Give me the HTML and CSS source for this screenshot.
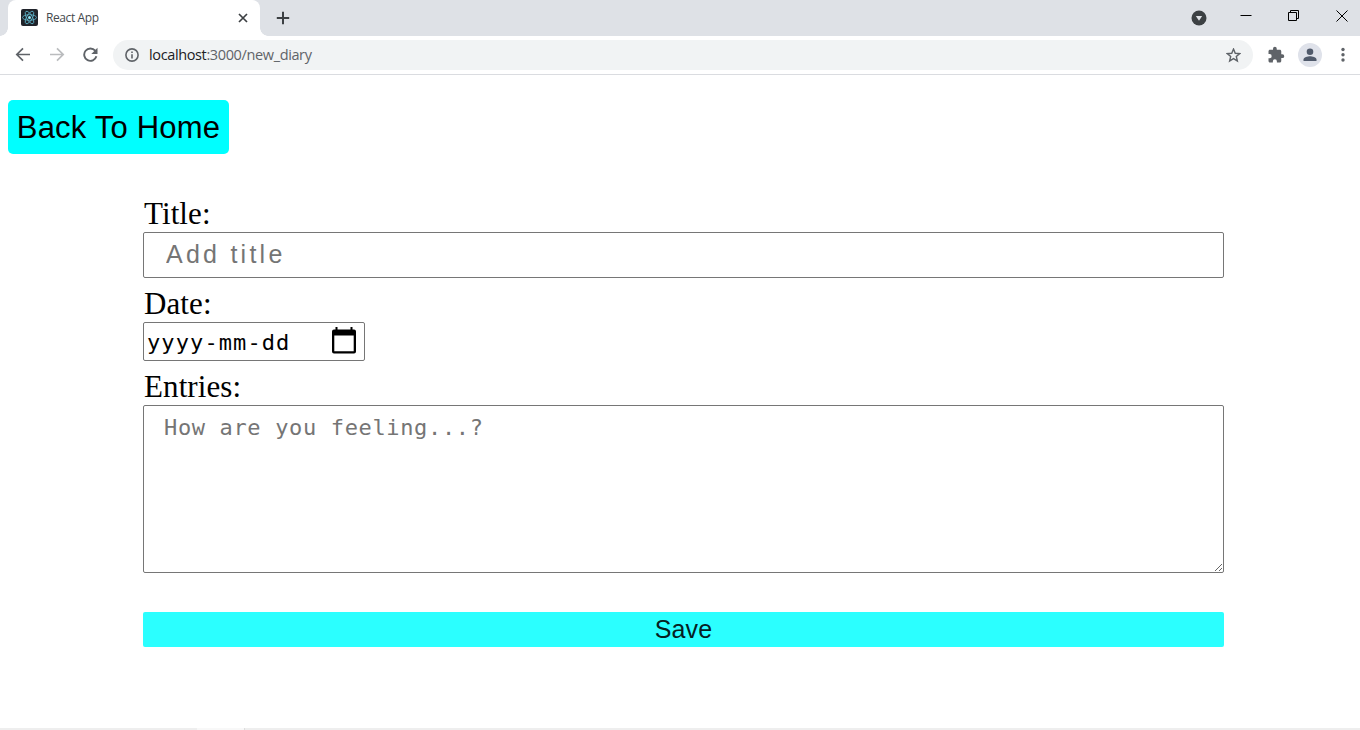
FILE: index.html
```html
<!DOCTYPE html>
<html lang="en">
<head>
<meta charset="utf-8">
<title>React App</title>
<link rel="stylesheet" href="styles.css">
</head>
<body>
<header class="tabs">
  <div class="tab">
    <svg class="favicon" width="17" height="17" viewBox="0 0 17 17"><rect width="17" height="17" rx="2" fill="#20232a"/><g fill="none" stroke="#61b9d0" stroke-width=".8"><ellipse cx="8.5" cy="8.5" rx="7" ry="2.8"/><ellipse cx="8.5" cy="8.5" rx="7" ry="2.8" transform="rotate(60 8.5 8.5)"/><ellipse cx="8.5" cy="8.5" rx="7" ry="2.8" transform="rotate(120 8.5 8.5)"/></g><circle cx="8.5" cy="8.5" r="1.500" fill="#8fe5f5"/></svg>
    <span class="tab-title">React App</span>
    <svg class="tab-close" width="10" height="10" viewBox="0 0 10 10"><path d="M1 1l8 8M9 1L1 9" stroke="#3c4043" stroke-width="1.700"/></svg>
  </div>
  <svg class="new-tab" width="14" height="14" viewBox="0 0 14 14"><path d="M7 .8v12.400M.8 7h12.400" stroke="#3c4043" stroke-width="2"/></svg>
  <div class="window-controls">
    <svg width="16" height="16" viewBox="0 0 16 16"><circle cx="8" cy="8" r="7.500" fill="#3c4043"/><path d="M4.800 6h6.400L8 10.800z" fill="#dee1e6"/></svg>
    <svg width="12" height="12" viewBox="0 0 12 12"><path d="M.5 5.500h11" stroke="#000"/></svg>
    <svg width="12" height="12" viewBox="0 0 12 12"><path d="M.5 2.500h8v8h-8zM2.500 2.500v-2h8v8h-2" fill="none" stroke="#000"/></svg>
    <svg width="12" height="12" viewBox="0 0 12 12"><path d="M.5.5l11 11M11.500.5l-11 11" stroke="#000"/></svg>
  </div>
</header>
<nav class="toolbar">
  <svg class="nav-icon" width="16" height="16" viewBox="0 0 16 16"><path d="M15 7.500H2M8 1.300L1.800 7.500 8 13.700" fill="none" stroke="#5f6368" stroke-width="1.700"/></svg>
  <svg class="nav-icon" width="16" height="16" viewBox="0 0 16 16"><path d="M1 7.500h13M8 1.300L14.200 7.500 8 13.700" fill="none" stroke="#babcbe" stroke-width="1.700"/></svg>
  <svg class="nav-icon" width="16" height="16" viewBox="0 0 16 16"><path d="M12.200 3.700A6.200 6.200 0 1 0 13.400 9.300" fill="none" stroke="#5f6368" stroke-width="1.900"/><path d="M14.500.8v6.200H8.300z" fill="#5f6368"/></svg>
  <div class="address">
    <svg width="14" height="14" viewBox="0 0 14 14"><circle cx="7" cy="7" r="6.100" fill="none" stroke="#5f6368" stroke-width="1.600"/><path d="M7 6.200v4.200M7 3.500v1.500" stroke="#5f6368" stroke-width="1.600"/></svg>
    <span class="url"><b>localhost</b>:3000/new_diary</span>
    <svg class="star" width="15" height="15" viewBox="0 0 15 15"><path d="M7.500 1.100l1.750 4.150 4.450.38-3.400 2.900 1.050 4.370L7.500 10.550 3.650 12.900 4.700 8.530 1.300 5.630l4.450-.38z" fill="none" stroke="#5f6368" stroke-width="1.400"/></svg>
  </div>
  <svg class="puzzle" width="18" height="18" viewBox="0 0 24 24"><path fill="#5f6368" d="M20.500 11H19V7c0-1.100-.9-2-2-2h-4V3.500a2.500 2.500 0 0 0-5 0V5H4c-1.100 0-1.990.9-1.990 2v3.800H3.500a2.700 2.700 0 0 1 0 5.400H2V20c0 1.100.9 2 2 2h3.800v-1.500a2.700 2.700 0 0 1 5.400 0V22H17c1.100 0 2-.9 2-2v-4h1.500a2.500 2.500 0 0 0 0-5z"/></svg>
  <svg class="profile" width="24" height="24" viewBox="0 0 24 24"><circle cx="12" cy="12" r="12" fill="#dfe2ea"/><circle cx="12" cy="8.700" r="3.300" fill="#505a6b"/><path d="M5.500 18v-1.500c0-2.200 4.300-3.300 6.500-3.300s6.500 1.100 6.500 3.300V18z" fill="#505a6b"/></svg>
  <svg class="menu" width="4" height="16" viewBox="0 0 4 16"><g fill="#5f6368"><circle cx="2" cy="2.500" r="1.700"/><circle cx="2" cy="7.700" r="1.700"/><circle cx="2" cy="13" r="1.700"/></g></svg>
</nav>
<main class="page">
  <button class="home">Back To Home</button>
  <form class="diary">
    <label class="label" for="title">Title:</label>
    <input class="title-input" id="title" type="text" placeholder="Add title">
    <span class="label date-label">Date:</span>
    <div class="date-input">
      <span>yyyy-mm-dd</span>
      <svg width="24" height="27" viewBox="0 0 24 27"><path d="M3.500 0h2v2.500h13V0h2v2.500H22a2 2 0 0 1 2 2v20a2 2 0 0 1-2 2H2a2 2 0 0 1-2-2v-20a2 2 0 0 1 2-2h1.500zM2.300 8.500v15.700h19.400V8.500z" fill="#000" fill-rule="evenodd"/></svg>
    </div>
    <label class="label entries-label" for="entries">Entries:</label>
    <textarea class="entries-input" id="entries" placeholder="How are you feeling...?"></textarea>
    <button class="save" type="button">Save</button>
  </form>
</main>
<footer class="edge"><span></span></footer>
</body>
</html>
```
FILE: styles.css
```css
* { box-sizing: border-box; }
body { margin: 0; height: 730px; display: flex; flex-direction: column; overflow: hidden; background: #fff; font-family: "Liberation Sans", Arial, sans-serif; }
svg { display: block; flex: none; }
.tabs { height: 36px; display: flex; align-items: center; padding-left: 8px; flex: none; background: radial-gradient(circle at 0 0, #dee1e6 7.5px, #fff 8px) 0 100% / 8px 8px no-repeat, radial-gradient(circle at 100% 0, #dee1e6 7.5px, #fff 8px) 260px 100% / 8px 8px no-repeat, #dee1e6; }
.tab { width: 252px; height: 36px; background: #fff; border-radius: 8px 8px 0 0; display: flex; align-items: center; padding: 0 12px 1px 13px; }
.tab-title { font: 12px "Open Sans", sans-serif; letter-spacing: -0.4px; color: #45494d; margin-left: 8px; }
.tab-close { margin-left: auto; }
.new-tab { margin-left: 16px; }
.window-controls { margin-left: auto; display: flex; align-items: center; padding: 0 12px 4px 0; gap: 36px; }
.window-controls svg:first-child { margin: 3px -3px 0 0; }
.toolbar { height: 39px; flex: none; border-bottom: 1px solid #dadce0; display: flex; align-items: center; padding-left: 15px; }
.nav-icon { margin-right: 18px; }
.nav-icon:nth-child(3) { margin-right: 14px; }
.address { width: 1140px; height: 30px; border-radius: 15px; background: #f1f3f4; display: flex; align-items: center; padding: 0 12px; }
.url { font: 14.5px "Open Sans", sans-serif; letter-spacing: -0.37px; color: #5f6368; margin: 0 0 2px 10px; }
.url b { font-weight: 400; color: #202124; }
.star { margin-left: auto; }
.puzzle { margin-left: 14px; }
.profile { margin-left: 13px; }
.menu { margin-left: 19px; }
.page { flex: 1; padding: 25px 8px 0; }
button { font-family: "Liberation Sans", Arial, sans-serif; border: 0; color: #000; padding: 0; display: block; }
.home { width: 221px; height: 54px; padding-top: 2px; border-radius: 5px; background: #00ffff; font-size: 31px; letter-spacing: 0.2px; white-space: nowrap; }
.diary { width: 1081px; margin: 42px 0 0 135px; display: flex; flex-direction: column; }
.label { font: 31px/36px "Liberation Serif", "Times New Roman", serif; letter-spacing: 0.1px; color: #000; padding-left: 1px; }
.title-input { height: 46px; border: 1px solid #767676; border-radius: 2px; padding: 0 22px 2px; font: 25px "Liberation Sans", Arial, sans-serif; letter-spacing: 3.25px; }
.title-input::placeholder, .entries-input::placeholder { color: #757575; opacity: 1; }
.date-label { margin-top: 8px; }
.date-input { width: 222px; height: 39px; border: 1px solid #767676; border-radius: 2px; display: flex; align-items: center; justify-content: space-between; padding: 0 8px 2px 3px; font: 22px "DejaVu Sans Mono", monospace; letter-spacing: 1.1px; }
.date-input span { padding-top: 3px; }
.entries-label { margin-top: 8px; }
.entries-input { height: 168px; border: 1px solid #767676; border-radius: 2px; padding: 9px 20px; font: 22px "DejaVu Sans Mono", monospace; letter-spacing: 0.65px; resize: vertical; }
.save { margin-top: 39px; height: 35px; border-radius: 2px; background: #2bffff; font-size: 25px; color: #06201f; letter-spacing: 0.1px; }
.edge { height: 2px; background: #eee; flex: none; padding-left: 197px; }
.edge span { display: block; width: 48px; height: 2px; background: #f8f8f8; border-right: 1px solid #ddd; }
```
